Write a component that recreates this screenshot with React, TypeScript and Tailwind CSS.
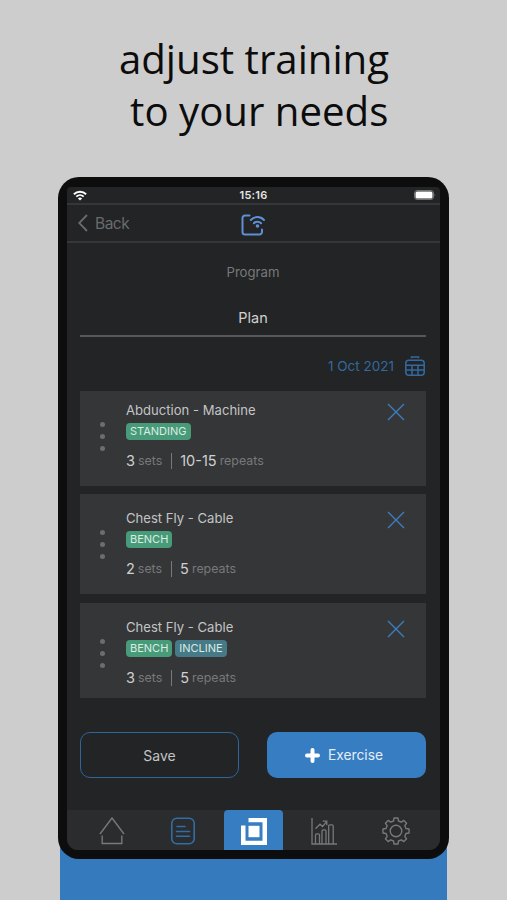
type Exercise = {
  name: string;
  tags: string[];
  sets: string;
  repeats: string;
};

const exercises: Exercise[] = [
  { name: "Abduction - Machine", tags: ["STANDING"], sets: "3", repeats: "10-15" },
  { name: "Chest Fly - Cable", tags: ["BENCH"], sets: "2", repeats: "5" },
  { name: "Chest Fly - Cable", tags: ["BENCH", "INCLINE"], sets: "3", repeats: "5" },
];

// Outline of an eight-toothed gear centred on 14,14
const gearPoints = Array.from({ length: 8 }, (_, i) => {
  const corners = [
    [-14, 10.3],
    [-8.5, 13.2],
    [8.5, 13.2],
    [14, 10.3],
  ];
  return corners.map(([offset, radius]) => {
    const angle = ((i * 45 + offset) * Math.PI) / 180;
    return `${(14 + radius * Math.sin(angle)).toFixed(2)},${(14 - radius * Math.cos(angle)).toFixed(2)}`;
  });
})
  .flat()
  .join(" ");

function StatusBar() {
  return (
    <div className="grid h-[18px] shrink-0 grid-cols-3 items-center border-b-2 border-[#34373a] pr-1 pl-[6px] text-white">
      <svg width="14" height="11" viewBox="0 0 14 11" fill="none" stroke="currentColor">
        <path d="M.9 4.2a8.7 8.7 0 0 1 12.2 0" strokeWidth="2" />
        <path d="M3.3 6.7a5.3 5.3 0 0 1 7.4 0" strokeWidth="1.8" />
        <path d="M7 10.6 4.9 8.5a3 3 0 0 1 4.2 0z" fill="currentColor" stroke="none" />
      </svg>
      <span className="-ml-[2px] text-center text-[11px] leading-none font-semibold tracking-[0.2px] text-[#e6e6e6]">
        15:16
      </span>
      <svg className="justify-self-end" width="22" height="10" viewBox="0 0 22 10">
        <rect x=".5" y=".5" width="19" height="9" rx="2.5" fill="none" stroke="#6f7173" />
        <rect x="1.5" y="1.5" width="17" height="7" rx="1.5" fill="#fff" />
        <path d="M20.6 3.5v3c.9-.4.9-2.6 0-3z" fill="#6f7173" />
      </svg>
    </div>
  );
}

function Header() {
  return (
    <div className="grid h-[38px] shrink-0 grid-cols-3 items-center border-b-2 border-[#343638] px-[11px]">
      <button className="flex items-center gap-[7px] text-[#696b6d]">
        <svg width="10" height="18" viewBox="0 0 10 18" fill="none" stroke="currentColor" strokeWidth="1.8">
          <path d="M9 1 1.2 9 9 17" />
        </svg>
        <span className="pt-px text-[15.5px] leading-none tracking-[-0.5px]">Back</span>
      </button>
      <svg
        className="mt-[3px] -ml-px justify-self-center"
        width="24"
        height="22"
        viewBox="0 0 24 22"
        fill="none"
        stroke="#5f8fd6"
        strokeWidth="2"
        strokeLinecap="round"
      >
        <path d="M8.5 1.5H4A2.5 2.5 0 0 0 1.5 4v14A2.5 2.5 0 0 0 4 20.5h14.5A2.5 2.5 0 0 0 21 18v-2.5" />
        <path d="M9.8 6a9 9 0 0 1 13.2 0" />
        <path d="M12.9 9.200a5 5 0 0 1 7.200 0" />
        <circle cx="16.5" cy="12" r="1.800" fill="#5f8fd6" stroke="none" />
      </svg>
    </div>
  );
}

function CalendarIcon() {
  return (
    <svg width="20" height="20" viewBox="0 0 20 20" fill="none" stroke="currentColor" strokeWidth="1.5">
      <path d="M6.5 2.2V1h7v1.200" />
      <rect x=".8" y="4.2" width="18.4" height="15" rx="3" />
      <path d="M1 9.200h18M1 14h18M7 9.200v10M13 9.200v10" />
    </svg>
  );
}

function ExerciseCard({ exercise }: { exercise: Exercise }) {
  return (
    <div className="flex h-[100px] shrink-0 bg-[#353638]">
      <div className="flex w-[45px] flex-col items-center gap-[7px] pt-[36px]">
        <span className="size-[5px] rounded-full bg-[#6c6d6f]" />
        <span className="size-[5px] rounded-full bg-[#6c6d6f]" />
        <span className="size-[5px] rounded-full bg-[#6c6d6f]" />
      </div>
      <div className="flex flex-1 flex-col items-start pt-[16px] pl-px">
        <h3 className="text-[13.1px] leading-4 text-[#c3c4c5]">{exercise.name}</h3>
        <div className="mt-[5px] flex gap-[3px]">
          {exercise.tags.map((tag) => (
            <span
              key={tag}
              className={`h-[17px] rounded-[4px] px-1 text-[11px] leading-[17px] text-[#dcebe5] ${
                tag === "INCLINE" ? "bg-[#457a86]" : "bg-[#489b78]"
              }`}
            >
              {tag}
            </span>
          ))}
        </div>
        <div className="mt-[13px] flex h-4 items-center text-[12.4px] leading-4 text-[#77797b]">
          <span className="mr-[3px] text-[14.5px] text-[#cfd0d1]">{exercise.sets}</span>
          sets
          <span className="mr-2 ml-[9px] h-4 w-px bg-[#77797b]" />
          <span className="mr-[3px] text-[14.5px] text-[#cfd0d1]">{exercise.repeats}</span>
          repeats
        </div>
      </div>
      <button className="mt-[17px] mr-[21px] h-[18px] text-[#3d7dbd]">
        <svg width="18" height="18" viewBox="0 0 18 18" fill="none" stroke="currentColor" strokeWidth="1.4">
          <path d="M1 1l16 16M17 1 1 17" />
        </svg>
      </button>
    </div>
  );
}

function TabBar() {
  return (
    <div className="flex h-10 shrink-0 items-stretch bg-[#2a2c2e] text-[#77797b]">
      <div className="flex w-[86px] items-center justify-center pt-[2px] pl-[3px]">
        <svg width="26" height="28" viewBox="0 0 26 28" fill="none" stroke="currentColor" strokeWidth="1.4">
          <path d="M1 17 13 1l12 16" />
          <path d="M3.2 18.5v8h19.6v-8" />
        </svg>
      </div>
      <div className="flex w-[71px] items-center justify-center pt-[2px] pr-[11px] text-[#326da6]">
        <svg width="24" height="28" viewBox="0 0 24 28" fill="none" stroke="currentColor" strokeWidth="1.6">
          <rect x=".8" y="1.3" width="22.4" height="25.4" rx="5" />
          <path d="M6 9.5h8M5.5 14.5h13M5.5 19.3h13" strokeLinecap="round" />
        </svg>
      </div>
      <div className="flex w-[59px] items-center justify-center rounded-t-[4px] bg-[#377dc1] pt-[2px]">
        <svg width="26" height="27" viewBox="0 0 26 27" fill="#fff">
          <path d="M7.5 0H26v27H0V7.5h4.5v15.200h17V4.300h-14z" />
          <rect x="7.5" y="7.8" width="11" height="11.4" />
        </svg>
      </div>
      <div className="flex w-[82px] items-center justify-center pt-[2px]">
        <svg width="26" height="28" viewBox="0 0 26 28" fill="none" stroke="currentColor" strokeWidth="1.3">
          <path d="M1 1v26h25" />
          <path d="M4.5 27v-9a1.2 1.2 0 0 1 1.2-1.2h1.6A1.2 1.2 0 0 1 8.5 18v9" />
          <path d="M11 27V14a1.2 1.2 0 0 1 1.2-1.2h1.6A1.2 1.2 0 0 1 15 14v13" />
          <path d="M17.7 27V9a1.2 1.2 0 0 1 1.2-1.2H21A1.2 1.2 0 0 1 22.2 9v18" />
          <path d="M4.500 11.800 9 7.200l2.500 2.300 4-4.700M11.800 4.200h4v4" />
        </svg>
      </div>
      <div className="flex flex-1 items-center justify-center pt-[2px] pr-[14px]">
        <svg
          width="28"
          height="28"
          viewBox="0 0 28 28"
          fill="none"
          stroke="currentColor"
          strokeWidth="1.4"
          strokeLinejoin="round"
        >
          <polygon points={gearPoints} />
          <circle cx="14" cy="14" r="5.8" />
        </svg>
      </div>
    </div>
  );
}

export default function App() {
  return (
    <div className="flex h-[900px] w-[507px] flex-col items-center overflow-hidden bg-[#cdcdcd] font-['Inter',sans-serif]">
      <h1 className="h-[177px] shrink-0 pt-[33px] pl-px text-center font-['Open_Sans',sans-serif] text-[40.2px] leading-[52px] whitespace-pre text-[#0c0c0c]">
        {"adjust training\n to your needs"}
      </h1>

      <div className="z-10 flex h-[682px] w-[391px] shrink-0 flex-col rounded-[21px] bg-[#0d0d0d] px-[9px] pt-[10px] pb-[9px]">
        <div className="flex flex-1 flex-col overflow-hidden rounded-t-[4px] rounded-b-[11px] bg-[#222425]">
          <StatusBar />
          <Header />
          <div className="flex flex-1 flex-col pr-[14px] pl-[13px]">
            <p className="mt-[21px] text-center text-[13.2px] leading-4 text-[#77797b]">Program</p>
            <div className="mt-[28px] h-[29px] border-b-2 border-[#55575a] text-center text-[14.5px] leading-5 text-[#cfd0d1]">
              Plan
            </div>
            <div className="mt-[19px] flex h-5 items-center justify-end gap-[11px] pr-px text-[#34699f]">
              <span className="pt-px text-[13.5px] leading-none">1 Oct 2021</span>
              <CalendarIcon />
            </div>
            <div className="mt-[15px] h-[307px] overflow-hidden">
              <div className="-mt-[5.3px] flex flex-col gap-[8.5px]">
                {exercises.map((exercise, i) => (
                  <ExerciseCard key={i} exercise={exercise} />
                ))}
              </div>
            </div>
            <div className="mt-[34px] flex h-[46px] justify-between">
              <button className="w-[159px] rounded-[10px] border border-[#2f659b] text-[14px] text-[#c3c4c5]">
                Save
              </button>
              <button className="flex w-[159px] items-center justify-center gap-2 rounded-[10px] bg-[#377dc1] pr-[5px] text-[13.8px] text-[#e3edf7]">
                <svg width="15" height="15" viewBox="0 0 15 15" stroke="#fff" strokeWidth="4" strokeLinecap="round">
                  <path d="M7.5 2v11M2 7.5h11" />
                </svg>
                Exercise
              </button>
            </div>
          </div>
          <TabBar />
        </div>
      </div>

      <div className="-mt-5 h-[61px] w-[387px] shrink-0 bg-[#357abd]" />
    </div>
  );
}
